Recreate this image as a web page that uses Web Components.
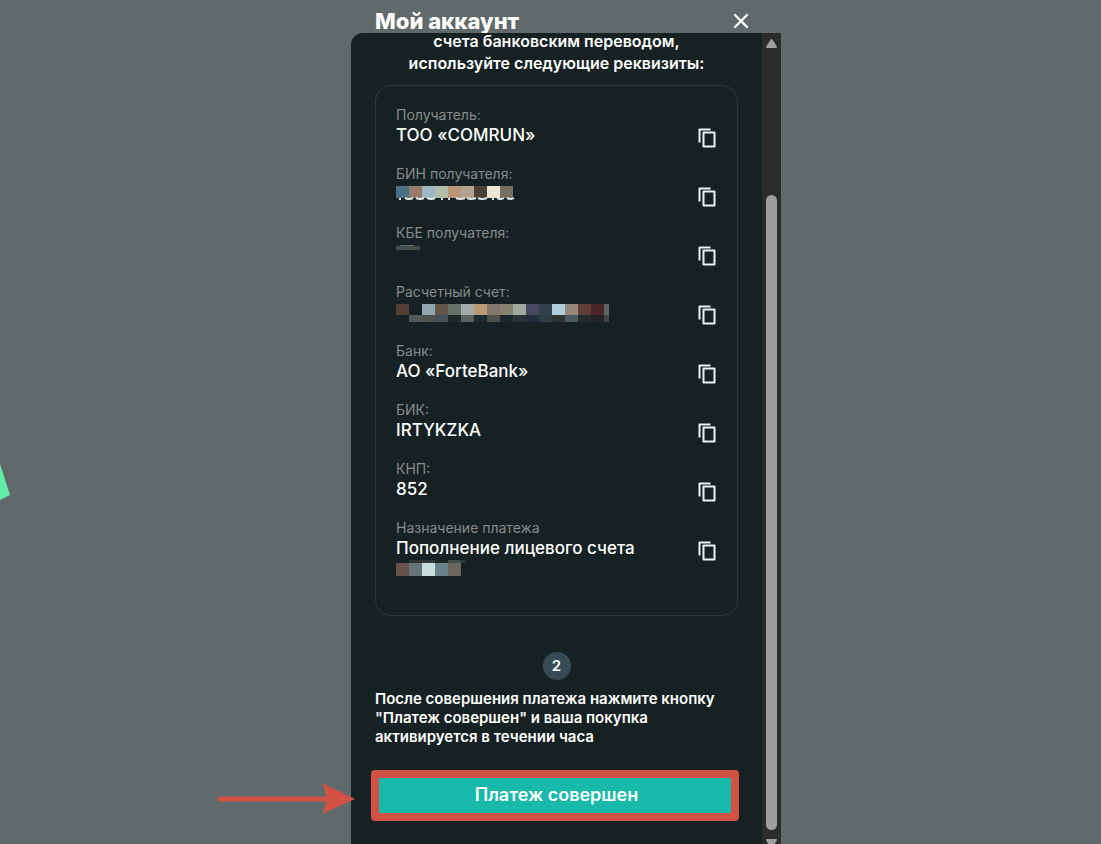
<!DOCTYPE html>
<html lang="ru">
<head>
<meta charset="utf-8">
<meta name="viewport" content="width=device-width, initial-scale=1">
<title>Мой аккаунт</title>
<style>
html, body { height: 100%; margin: 0; }
body { background: #606a6b; color: #fff; font-family: Inter, "Noto Sans", sans-serif; overflow: hidden; }
</style>
</head>
<body>
<account-page></account-page>
<script>
const define = (name, html, init) => {
  const tpl = document.createElement('template');
  tpl.innerHTML = html;
  customElements.define(name, class extends HTMLElement {
    constructor() {
      super();
      this.attachShadow({ mode: 'open' }).append(tpl.content.cloneNode(true));
    }
    connectedCallback() { if (init) init(this, this.shadowRoot); }
  });
};

define('copy-button', `
<style>
:host { display: block; }
button { display: block; width: 24px; height: 24px; padding: 0; border: 0; background: none; color: #eef1f2; cursor: pointer; }
svg { display: block; }
</style>
<button type="button" aria-label="Скопировать">
<svg width="24" height="24" viewBox="0 0 24 24" fill="none" stroke="currentColor" stroke-width="2" stroke-linejoin="round">
<path d="M4.500 16.500V3.500H15.500"/><path d="M8.500 6.500H19.500V20.500H8.500Z"/>
</svg></button>`);

define('pixel-mask', `
<style>:host { display: block; } svg { display: block; }</style><svg aria-hidden="true"></svg>`,
(host, root) => {
  const h = +host.getAttribute('height');
  const svg = root.querySelector('svg');
  svg.setAttribute('width', 216);
  svg.setAttribute('height', h);
  // each band: x,y,height,cell width|colours
  svg.innerHTML = host.getAttribute('bands').split(';').map(band => {
    const [box, colours] = band.split('|');
    const [x, y, bh, w] = box.split(',').map(Number);
    return colours.split(' ').map((c, i) => c === '-' ? '' :
      `<rect x="${x + i * w}" y="${y}" width="${w}" height="${bh}" fill="#${c}" shape-rendering="crispEdges"/>`).join('');
  }).join('') + (host.hasAttribute('tails')
    ? '<path d="M4 14v2M46 14v2M53 14v2M97 14v2M9 14q4 2 8 0M20 14q4 2 8 0M31 14q4 2 8 0M60 14q4 2 9 0M71 14q4 2 9 0M82 14q4 2 9 0M101 14q4 2 7 0M111 14q4 2 7 0" fill="none" stroke="#dfe6e6" stroke-width="2"/>' : '');
});

define('requisite-row', `
<style>
:host { display: grid; grid-template-columns: 1fr auto; min-height: 59px; }
.label { font-size: 14px; line-height: 20px; color: #888b8b; }
.value { font-size: 17px; line-height: 20px; font-weight: 500; }
copy-button { margin-top: 21px; }
</style>
<div><div class="label"></div><div class="value"><slot></slot></div></div>
<copy-button></copy-button>`,
(host, root) => { root.querySelector('.label').textContent = host.getAttribute('label'); });

define('requisite-card', `
<style>
:host { display: block; box-sizing: border-box; border: 1px solid #2b3738; border-radius: 16px; padding: 19px 18px 38px 20px; }
</style><slot></slot>`);

define('step-badge', `
<style>
:host { display: grid; place-items: center; width: 28px; height: 28px; margin: 0 auto; border-radius: 50%; background: #364b55; font-size: 15px; line-height: 28px; font-weight: 600; }
</style><slot></slot>`);

define('pay-button', `
<style>
:host { display: block; position: relative; }
button { display: block; width: 100%; height: 49px; padding: 0 0 1px; border: 0; border-radius: 8px; background: #17b9aa; color: #fff; font: 600 18px/24px Inter, "Noto Sans", sans-serif; cursor: pointer; }
.frame { position: absolute; inset: -1px -1px -1px -4px; border: 8px solid #d15144; border-radius: 4px; pointer-events: none; }
.arrow { position: absolute; right: 383px; top: 12px; pointer-events: none; }
</style>
<button type="button"><slot></slot></button>
<div class="frame"></div>
<svg class="arrow" width="138" height="32" viewBox="0 0 138 32" aria-hidden="true">
<path d="M3 16H112" stroke="#d15144" stroke-width="5" stroke-linecap="round"/><path d="M105 0L138 16L105 31Q113 16 105 0Z" fill="#d15144"/>
</svg>`);

define('scroll-rail', `
<style>
:host { display: flex; flex-direction: column; align-items: center; width: 19px; background: #2c2b2c; }
svg { display: block; flex: none; }
.gap { flex: 143 0 0; }
.thumb { flex: 635 0 0; width: 11px; border-radius: 6px; background: #9f9f9f; }
</style>
<svg width="19" height="19" viewBox="0 0 19 19"><path d="M9.500 7L14 14H5Z" fill="#9f9f9f" stroke="#9f9f9f" stroke-width="2" stroke-linejoin="round"/></svg>
<div class="gap"></div><div class="thumb"></div>
<svg width="19" height="14" viewBox="0 0 19 14"><path d="M5 10H14L9.500 17Z" fill="#9f9f9f" stroke="#9f9f9f" stroke-width="2" stroke-linejoin="round"/></svg>`);

define('account-dialog', `
<style>
:host { display: flex; flex-direction: column; width: 430px; max-width: 100%; height: 100%; }
header { display: flex; justify-content: space-between; align-items: flex-start; flex: none; height: 33px; box-sizing: border-box; padding: 9px 29px 0 24px; }
h1 { margin: 0; font-size: 22px; line-height: 25px; font-weight: 800; }
.close { width: 22px; height: 22px; padding: 0; border: 0; background: none; color: #fff; cursor: pointer; }
svg { display: block; }
.panel { position: relative; flex: 1; min-height: 0; display: flex; background: #152122; border-radius: 12px 0 0 0; }
.body { flex: 1; padding: 0 24px; }
.intro { margin: -3px 0 11px; text-align: center; font-size: 16px; line-height: 22px; font-weight: 600; }
.note { margin: 9px 0 25px; font-size: 15px; line-height: 19px; font-weight: 600; }
step-badge { margin-top: 36px; }
</style>
<header><h1>Мой аккаунт</h1>
<button class="close" type="button" aria-label="Закрыть"><svg width="22" height="22" viewBox="0 0 22 22" stroke="currentColor" stroke-width="2.400" stroke-linecap="round"><path d="M5 6L17 18M17 6L5 18"/></svg></button></header>
<div class="panel">
<div class="body">
<p class="intro">счета банковским переводом,<br>используйте следующие реквизиты:</p>
<requisite-card>
<requisite-row label="Получатель:">ТОО «COMRUN»</requisite-row>
<requisite-row label="БИН получателя:"><pixel-mask height="16" tails bands="0,2,12,13|4b6f83 967b6c 9bb7c2 b0bda9 b79778 b0a393 4c4033 ede6d2 756e62"></pixel-mask></requisite-row>
<requisite-row label="КБЕ получателя:"><pixel-mask height="7" bands="0,3,4,12|414f57 474c46;4,2,1,7|526067 677273"></pixel-mask></requisite-row>
<requisite-row label="Расчетный счет:"><pixel-mask height="20" bands="0,2,11,13|543f35 - 91a6b0 65564a 66716a a4a9aa bc9975 81776d 84836e a0aa9f 4b4762 324149 b0cedb 96897b 613d37 492529;208,2,11,5|5f6766;13,13,7,13|505756 4f514d 43525a 1b2827 596260 1c2b31 50504b 17252d 2b3536 222d3d 2f3e46 2e342f 485961 202b2a 242325;208,13,7,5|3b4747"></pixel-mask></requisite-row>
<requisite-row label="Банк:">АО «ForteBank»</requisite-row>
<requisite-row label="БИК:">IRTYKZKA</requisite-row>
<requisite-row label="КНП:">852</requisite-row>
<requisite-row label="Назначение платежа">Пополнение лицевого счета<pixel-mask height="19" bands="0,5,13,13|66524a 65757a cadfdd 6a838b 69665f;13,2,3,13|303435 353938 172728 434c4c;65,2,3,4|263940"></pixel-mask></requisite-row>
</requisite-card>
<step-badge>2</step-badge>
<p class="note">После совершения платежа нажмите кнопку<br>"Платеж совершен" и ваша покупка<br>активируется в течении часа</p>
<pay-button>Платеж совершен</pay-button>
</div>
<scroll-rail></scroll-rail>
</div>`);

define('account-page', `
<style>
:host { display: flex; justify-content: center; position: relative; height: 100vh; box-sizing: border-box; padding-left: 31px; overflow: hidden; }
.shape { position: absolute; left: 0; top: 460px; }
</style>
<svg class="shape" width="11" height="42" viewBox="0 0 11 42" aria-hidden="true"><path d="M0 4L10 35L0 40Z" fill="#64eda9"/></svg>
<account-dialog></account-dialog>`);
</script>
</body>
</html>
